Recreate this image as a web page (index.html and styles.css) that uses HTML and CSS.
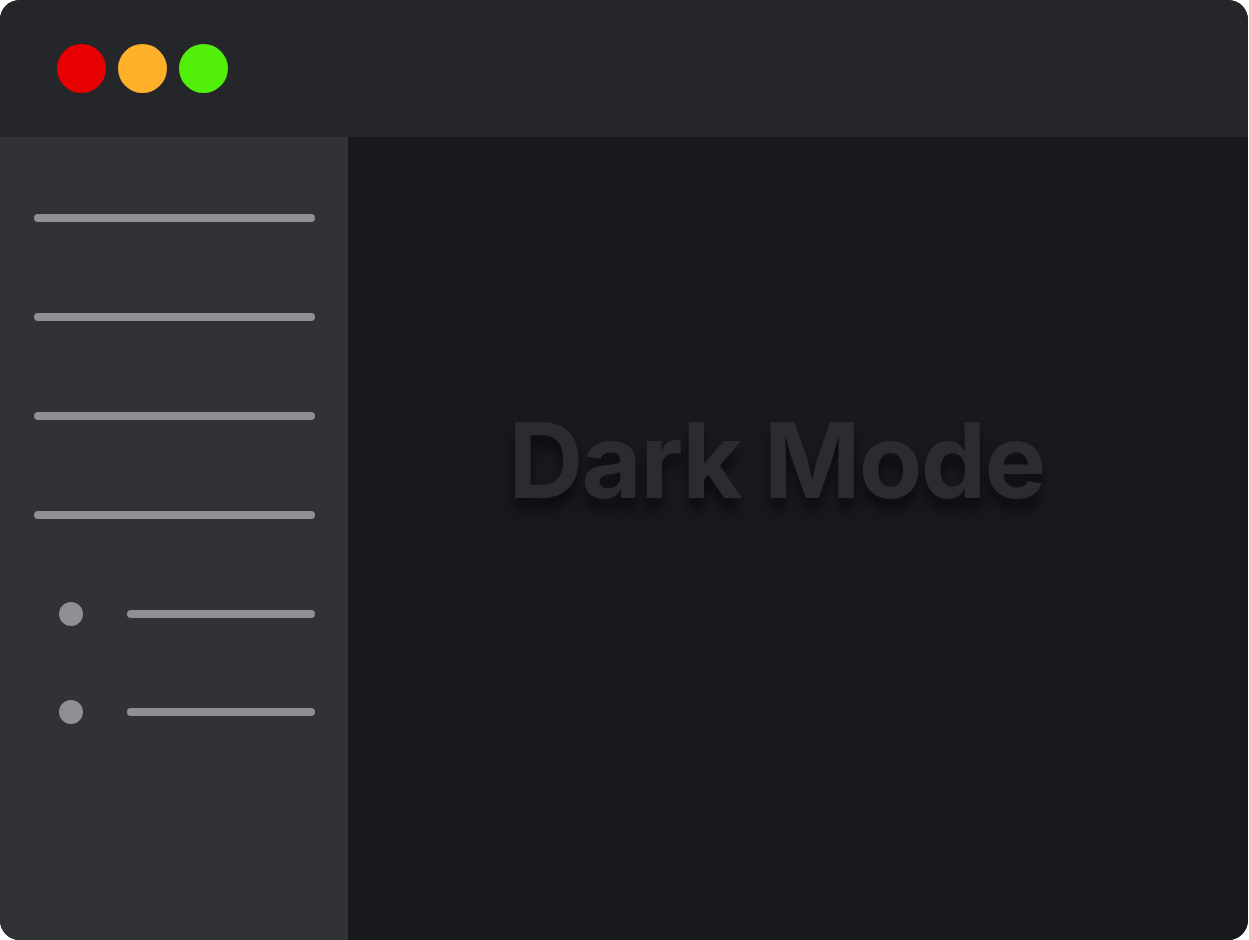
FILE: index.html
```html
<!DOCTYPE html>
<html lang="en">
<head>
<meta charset="utf-8">
<title>Dark Mode</title>
<link rel="stylesheet" href="styles.css">
</head>
<body>
<div class="window">
  <header class="titlebar">
    <span class="light red"></span>
    <span class="light yellow"></span>
    <span class="light green"></span>
  </header>
  <div class="content">
    <aside class="sidebar">
      <div class="row"><span class="bar"></span></div>
      <div class="row"><span class="bar"></span></div>
      <div class="row"><span class="bar"></span></div>
      <div class="row"><span class="bar"></span></div>
      <div class="row sub"><span class="dot"></span><span class="bar"></span></div>
      <div class="row sub"><span class="dot"></span><span class="bar"></span></div>
    </aside>
    <main class="main">
      <h1 class="title">Dark Mode</h1>
    </main>
  </div>
</div>
</body>
</html>
```

FILE: styles.css
```css
html, body {
  margin: 0;
  padding: 0;
  background: #ffffff;
}
body {
  width: 1249px;
  height: 940px;
  overflow: hidden;
}
.window {
  width: 1248px;
  height: 940px;
  border-radius: 20px;
  overflow: hidden;
  display: flex;
  flex-direction: column;
  background: #18191d;
  box-shadow: inset 1px 0 0 #3a3b3f;
}
.titlebar {
  height: 137px;
  flex: none;
  background: #25262a;
  display: flex;
  align-items: center;
  gap: 12px;
  padding-left: 57px;
  box-sizing: border-box;
}
.light {
  width: 49px;
  height: 49px;
  border-radius: 50%;
  display: block;
}
.red { background: #e80000; }
.yellow { background: #ffb02a; }
.green { background: #52ef0a; }
.content {
  flex: 1;
  display: flex;
}
.sidebar {
  width: 348px;
  flex: none;
  background: #313236;
  padding: 31px 33px 0 34px;
  box-sizing: border-box;
  display: flex;
  flex-direction: column;
}
.row {
  height: 99px;
  display: flex;
  align-items: center;
}
.row:last-child {
  height: 97px;
}
.bar {
  flex: 1;
  height: 8px;
  border-radius: 4px;
  background: #909094;
}
.sub {
  padding-left: 25px;
  gap: 44px;
}
.dot {
  width: 24px;
  height: 24px;
  border-radius: 50%;
  background: #909094;
  flex: none;
}
.main {
  flex: 1;
  background: #18191d;
  display: flex;
  justify-content: center;
  align-items: flex-start;
  padding-top: 271px;
  padding-right: 43px;
  box-sizing: border-box;
}
.title {
  margin: 0;
  font-family: Inter, "Liberation Sans", sans-serif;
  font-weight: 700;
  font-size: 104px;
  line-height: 1;
  letter-spacing: -1.8px;
  color: #2b2c30;
  text-shadow: 0 12px 12px rgba(0, 0, 0, 0.5);
}
```
